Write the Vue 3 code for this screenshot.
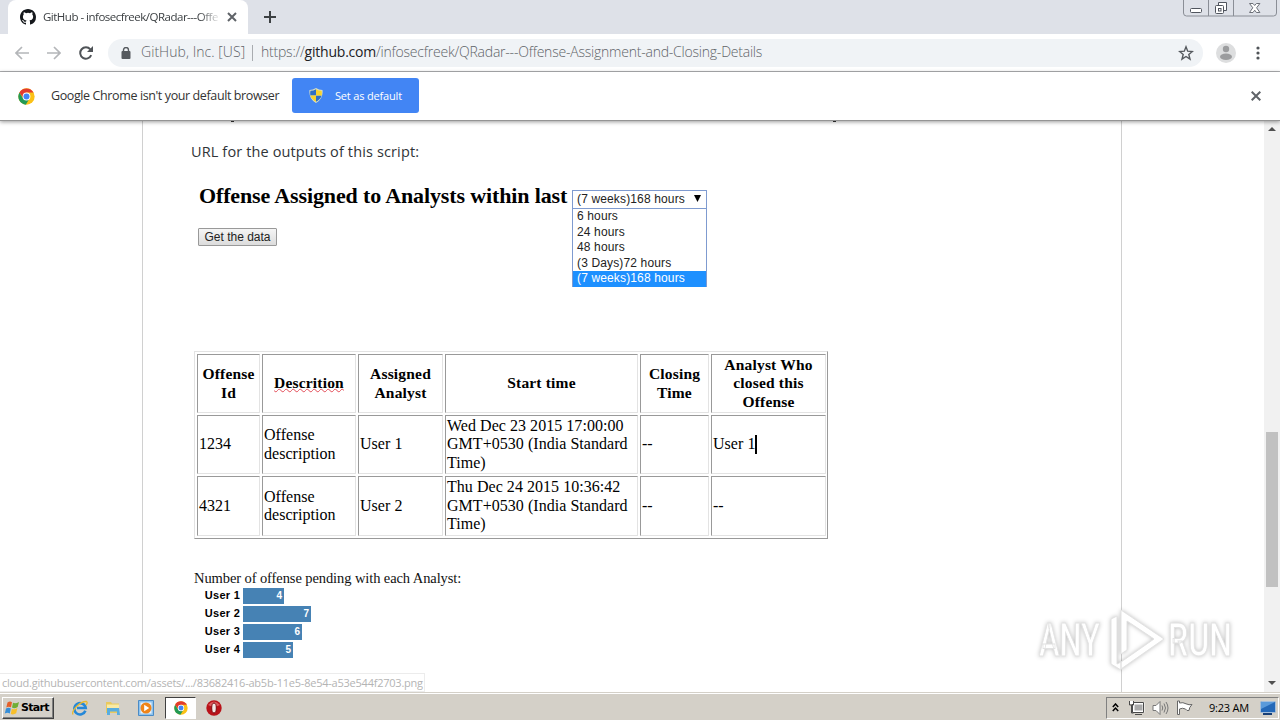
<template>
  <div class="screen">
    <header class="tabstrip">
      <div class="tab">
        <svg class="tab_icon" width="16" height="16" viewBox="0 0 16 16"><path fill="#15181c" d="M8 0C3.58 0 0 3.58 0 8c0 3.54 2.29 6.53 5.47 7.59.4.07.55-.17.55-.38 0-.19-.01-.82-.01-1.49-2.01.37-2.53-.49-2.69-.94-.09-.23-.48-.94-.82-1.13-.28-.15-.68-.52-.01-.53.63-.01 1.08.58 1.23.82.72 1.21 1.87.87 2.33.66.07-.52.28-.87.51-1.07-1.78-.2-3.64-.89-3.64-3.95 0-.87.31-1.59.82-2.15-.08-.2-.36-1.02.08-2.12 0 0 .67-.21 2.2.82a7.6 7.6 0 0 1 4 0c1.53-1.04 2.2-.82 2.2-.82.44 1.1.16 1.92.08 2.12.51.56.82 1.27.82 2.15 0 3.07-1.87 3.75-3.65 3.95.29.25.54.73.54 1.48 0 1.07-.01 1.93-.01 2.2 0 .21.15.46.55.38A8.01 8.01 0 0 0 16 8c0-4.42-3.58-8-8-8z"/></svg>
        <span class="tab_title">GitHub - infosecfreek/QRadar---Offe</span>
        <svg class="tab_close" width="10" height="10" viewBox="0 0 10 10"><path d="M1 1l8 8M9 1L1 9" stroke="#5f6368" stroke-width="2"/></svg>
      </div>
      <svg class="tab_new" width="14" height="14" viewBox="0 0 14 14"><path d="M7 1v12M1 7h12" stroke="#3c4043" stroke-width="2"/></svg>
      <svg class="win_btns" width="95" height="18" viewBox="0 0 95 18">
        <path d="M.5 0v13q0 3 3 3h87q3 0 3-3V0M25.500 0v16M50.500 0v16" fill="none" stroke="#8a8e96"/>
        <rect x="7.500" y="8.500" width="11" height="4" rx="1" fill="#fff" stroke="#50555e"/>
        <path d="M35.500 5V2.500h8v8H41" fill="#fff" stroke="#50555e"/>
        <rect x="32.500" y="5.500" width="8" height="8" rx="1" fill="#fff" stroke="#50555e"/>
        <rect x="35.500" y="8.500" width="2.500" height="2.500" fill="none" stroke="#50555e"/>
        <path d="M66.500 3.500h3.500l1.700 2 1.700-2h3.500l-3.300 4.300 3.300 4.700h-3.500l-1.700-2.300-1.700 2.300h-3.500l3.300-4.700z" fill="#fff" stroke="#6c7078"/>
      </svg>
    </header>

    <div class="toolbar">
      <svg class="nav" width="14" height="14" viewBox="0 0 14 14"><path d="M14 7H1.500M7 1L1 7l6 6" fill="none" stroke="#b4b6b9" stroke-width="1.700"/></svg>
      <svg class="nav" width="14" height="14" viewBox="0 0 14 14"><path d="M0 7h12.500M7 1l6 6-6 6" fill="none" stroke="#b4b6b9" stroke-width="1.700"/></svg>
      <svg class="nav reload" width="14" height="14" viewBox="0 0 14 14"><path d="M12.200 9.200A5.700 5.700 0 1 1 11.300 3.300" fill="none" stroke="#505458" stroke-width="2"/><path d="M14 0v6H8z" fill="#505458"/></svg>
      <div class="omnibox">
        <svg width="10" height="12" viewBox="0 0 10 12"><rect x=".5" y="4" width="9" height="8" rx="1" fill="#565a5f"/><path d="M2.500 5V3a2.500 2.500 0 0 1 5 0v2" fill="none" stroke="#565a5f" stroke-width="1.400"/></svg>
        <span class="owner">GitHub, Inc. [US]</span>
        <i class="sep"></i>
        <span class="url">https://<b>github.com</b>/infosecfreek/QRadar---Offense-Assignment-and-Closing-Details</span>
        <svg class="star" width="16" height="16" viewBox="0 0 16 16"><path d="M8 1.800l1.700 4.400 4.700.3-3.600 3 1.200 4.600L8 11.500l-4 2.600 1.200-4.600-3.600-3 4.700-.3z" fill="none" stroke="#55595e" stroke-width="1.400"/></svg>
      </div>
      <svg class="avatar" width="20" height="20" viewBox="0 0 20 20"><circle cx="10" cy="10" r="10" fill="#dddedf"/><circle cx="10" cy="6" r="3.200" fill="#9b9c9e"/><ellipse cx="10" cy="13.800" rx="6" ry="3.200" fill="#9b9c9e"/></svg>
      <svg class="dots" width="4" height="14" viewBox="0 0 4 14"><g fill="#505458"><circle cx="2" cy="2" r="1.600"/><circle cx="2" cy="7" r="1.600"/><circle cx="2" cy="12" r="1.600"/></g></svg>
    </div>

    <div class="infobar">
      <svg width="17" height="17" viewBox="0 0 48 48"><circle cx="24" cy="24" r="23" fill="#fbc116"/><path d="M4 12.500A23 23 0 0 0 22 47l11-18-9-5-10 5z" fill="#229a55"/><path d="M24 13h20a23 23 0 0 0-40-.5l10 14z" fill="#e33b2e"/><circle cx="24" cy="24" r="11" fill="#fff"/><circle cx="24" cy="24" r="8.500" fill="#4285f4"/></svg>
      <span class="info_text">Google Chrome isn't your default browser</span>
      <button class="default_btn">
        <svg width="14" height="15" viewBox="0 0 14 15"><path d="M7 0q3 2 6.500 2Q14.500 11 7 15-.5 11 .5 2 4 2 7 0z" fill="#d8dfc6"/><path d="M7 1.300V7.500H1.300Q1 5 1.400 2.800 4.600 2.800 7 1.300zM7 7.500h5.600Q11.500 11.500 7 13.800z" fill="#2f6fc4"/><path d="M7 1.300v6.200h5.700Q13 5 12.600 2.800 9.400 2.800 7 1.300zM7 7.500H1.400Q2.500 11.500 7 13.800z" fill="#f8d32d"/></svg>
        <span>Set as default</span>
      </button>
      <svg class="info_close" width="10" height="10" viewBox="0 0 10 10"><path d="M.7.7l8.600 8.600M9.300.7L.7 9.300" stroke="#5f6368" stroke-width="2"/></svg>
    </div>

    <main class="page">
      <article class="readme">
        <div class="cut"><i></i><i></i></div>
        <p class="intro">URL for the outputs of this script:</p>
        <div class="headline">
          <h2>Offense Assigned to Analysts within last</h2>
          <div class="select">
            <span>(7 weeks)168 hours</span>
            <svg width="7" height="7" viewBox="0 0 8 8"><path d="M0 0h8L4 8z"/></svg>
            <ul class="options">
              <li v-for="option in options" :key="option" :class="{ active: option === selected }">{{ option }}</li>
            </ul>
          </div>
        </div>
        <button class="get_btn">Get the data</button>

        <div class="table">
          <div v-for="head in heads" :key="head" class="cell head"><span :class="{ typo: head === 'Descrition' }">{{ head }}</span></div>
          <template v-for="row in rows" :key="row[0]">
            <div v-for="(value, i) in row" :key="i" class="cell">
              <span :class="{ caret: i === 5 && value === 'User 1' }">{{ value }}</span>
            </div>
          </template>
        </div>

        <p class="pending">Number of offense pending with each Analyst:</p>
        <div class="chart">
          <div v-for="bar in bars" :key="bar.name" class="bar_row">
            <span class="bar_name">{{ bar.name }}</span>
            <span class="bar" :style="{ width: bar.width + 'px' }">{{ bar.count }}</span>
          </div>
        </div>
      </article>

      <div class="scrollbar">
        <svg width="8" height="4" viewBox="0 0 8 4"><path d="M0 4l4-4 4 4z" fill="#505050"/></svg>
        <i class="thumb"></i>
        <svg width="8" height="4" viewBox="0 0 8 4"><path d="M0 0l4 4 4-4z" fill="#505050"/></svg>
      </div>

      <div class="status">cloud.githubusercontent.com/assets/.../83682416-ab5b-11e5-8e54-a53e544f2703.png</div>

      <svg class="watermark" width="220" height="76" viewBox="0 0 220 76">
        <g class="mark">
          <text x="9" y="53" textLength="61" lengthAdjust="spacingAndGlyphs">ANY</text>
          <text x="138" y="53" textLength="64" lengthAdjust="spacingAndGlyphs">RUN</text>
          <path d="M91 7l43 29-43 30v-7l33-23-27-18v29l-6 4zM81 16l6-3v48l4-2v8l-10-6z"/>
        </g>
      </svg>
    </main>

    <footer class="taskbar">
      <div class="start">
        <svg width="16" height="16" viewBox="0 0 16 16"><path d="M3.500 2.500Q6 .8 8 2.200L7 7.300Q4.600 6 2.300 7.400z" fill="#e5602a"/><path d="M9 2.700q2.500 1.300 6-.8l-1.300 5Q10.500 9 8 7.600z" fill="#70ae35"/><path d="M2 8.500q2.500-1.400 4.800-.1l-1 5.100Q3.500 12 .8 13.600z" fill="#368ed8"/><path d="M7.800 8.800q2.700 1.300 5.600-.7l-1.200 5.200q-3 1.900-5.400.7z" fill="#f8bf2a"/></svg>
        <span>Start</span>
      </div>
      <svg class="task" width="16" height="16" viewBox="0 0 16 16"><path d="M13.400 10.800A5.700 5.700 0 1 1 13.700 8H5" fill="none" stroke="#2588d8" stroke-width="2.600"/><path d="M1 14.500C-1 11 8 1 14.500 1.500q1.500.8-.5 3.700" fill="none" stroke="#e8b930" stroke-width="1.300"/></svg>
      <svg class="task" width="16" height="16" viewBox="0 0 16 16"><path d="M1 2h5l1 1.500h7V13H1z" fill="#e9c95f"/><path d="M2 4.500h12V10H2z" fill="#f9eaa5"/><path d="M2 8h12l1 7h-3v-3.500H5V15H2z" fill="#58ade0"/></svg>
      <svg class="task" width="16" height="16" viewBox="0 0 16 16"><path d="M.5.5h15v15H.5z" fill="#8ec3ee" stroke="#4a8bc6"/><rect x="2.500" y="2.500" width="11" height="11" fill="#e9f3fb"/><circle cx="8" cy="8" r="5.500" fill="#ef8419"/><path d="M6.200 4.800L11.200 8l-5 3.200z" fill="#fff"/></svg>
      <div class="task_active">
        <svg width="14" height="14" viewBox="0 0 48 48"><circle cx="24" cy="24" r="23" fill="#fbc116"/><path d="M4 12.500A23 23 0 0 0 22 47l11-18-9-5-10 5z" fill="#229a55"/><path d="M24 13h20a23 23 0 0 0-40-.5l10 14z" fill="#e33b2e"/><circle cx="24" cy="24" r="11" fill="#fff"/><circle cx="24" cy="24" r="8.500" fill="#4285f4"/></svg>
      </div>
      <svg class="opera" width="16" height="16" viewBox="0 0 16 16"><circle cx="8" cy="8" r="7.700" fill="#b91219"/><path d="M2 5q6-7 12 0-6 3-12 0z" fill="#dc5a5c"/><ellipse cx="8" cy="8" rx="2.300" ry="5" fill="#f1e9e6" stroke="#7c0a0e"/></svg>
      <div class="tray">
        <svg width="7" height="9" viewBox="0 0 7 9"><path d="M.8 4l2.700-3 2.700 3M.8 8l2.700-3 2.700 3" fill="none" stroke="#000" stroke-width="1.500"/></svg>
        <svg class="net" width="17" height="16" viewBox="0 0 17 16"><rect x="5.500" y="3.500" width="10" height="8" fill="#aaa" stroke="#fff" stroke-width="2"/><path d="M4.500 2.500h11v10h-11zM7 14.500h7M1.500 1v4h4V1M3.500 5v8h2" fill="none" stroke="#4a4a4a"/><path d="M2 1h3v3H2z" fill="#fff"/></svg>
        <svg class="sound" width="17" height="16" viewBox="0 0 17 16"><path d="M1 5.500h3l4-4v13l-4-4H1z" fill="#fff" stroke="#777"/><path d="M10 5.500q1.500 2.500 0 5M12 3.500q3 4.500 0 9M14 2q4 6 0 12" fill="none" stroke="#777"/></svg>
        <svg class="flag" width="17" height="16" viewBox="0 0 17 16"><path d="M1.500 1v13.500h2V9q3-1.500 6 0l1.500 1.500h2q0-3 3-6-3 .8-6-.7-3-1.800-6.500-.8V1z" fill="#fff" stroke="#666"/></svg>
        <span class="clock">9:23 AM</span>
        <svg class="desk" width="16" height="14" viewBox="0 0 16 14"><rect x=".5" y=".5" width="15" height="11" rx="1" fill="#2468b8" stroke="#a4bedb"/><path d="M1 1h14L1 8z" fill="#5a9adb"/><path d="M3 13h9" stroke="#183f76" stroke-width="2"/></svg>
      </div>
    </footer>
  </div>
</template>

<script setup>
const selected = '(7 weeks)168 hours';
const options = ['6 hours', '24 hours', '48 hours', '(3 Days)72 hours', '(7 weeks)168 hours'];

const heads = ['Offense Id', 'Descrition', 'Assigned Analyst', 'Start time', 'Closing Time', 'Analyst Who closed this Offense'];
const rows = [
  ['1234', 'Offense description', 'User 1', 'Wed Dec 23 2015 17:00:00 GMT+0530 (India Standard Time)', '--', 'User 1'],
  ['4321', 'Offense description', 'User 2', 'Thu Dec 24 2015 10:36:42 GMT+0530 (India Standard Time)', '--', '--']
];

const bars = [
  { name: 'User 1', count: 4, width: 41 },
  { name: 'User 2', count: 7, width: 68 },
  { name: 'User 3', count: 6, width: 59 },
  { name: 'User 4', count: 5, width: 50 }
];
</script>

<style>
body {
  background: #fff;
  overflow: hidden;
}
</style>

<style scoped>
* {
  box-sizing: border-box;
}
svg {
  display: block;
  flex: none;
}
.screen {
  width: 1280px;
  height: 720px;
  display: flex;
  flex-direction: column;
  overflow: hidden;
  background: #fff;
  font-family: "Open Sans", "Noto Sans", sans-serif;
  white-space: nowrap;
}

/* tabs */
.tabstrip {
  height: 34px;
  flex: none;
  display: flex;
  background: #dee1e8;
}
.tab {
  width: 240px;
  height: 34px;
  margin-left: 8px;
  padding-left: 12px;
  display: flex;
  align-items: center;
  background: #fff;
  border-radius: 8px 8px 0 0;
}
.tab_title {
  width: 178px;
  margin: -1px 0 0 7px;
  font-size: 11.500px;
  letter-spacing: -0.5px;
  color: #3c4043;
  -webkit-mask-image: linear-gradient(90deg, #000 88%, transparent);
  mask-image: linear-gradient(90deg, #000 88%, transparent);
}
.tab_close {
  margin-left: 6px;
}
.tab_new {
  margin: 10px 0 0 15px;
}
.win_btns {
  margin-left: auto;
  margin-right: 2px;
}

/* toolbar */
.toolbar {
  height: 38px;
  flex: none;
  display: flex;
  align-items: center;
  padding-left: 15px;
  border-bottom: 1px solid #b0b1b3;
}
.nav {
  margin-right: 18px;
}
.reload {
  margin-right: 15px;
}
.omnibox {
  width: 1095px;
  height: 28px;
  display: flex;
  align-items: center;
  padding-left: 13px;
  border-radius: 14px;
  background: #f0f3f6;
}
.owner,
.url {
  margin-top: -2px;
  font-size: 14px;
  font-weight: 300;
  color: #5f6368;
}
.owner {
  margin-left: 10px;
  width: 104px;
  letter-spacing: 0.05px;
}
.sep {
  width: 1px;
  height: 16px;
  margin: 0 8px 0 7px;
  background: #a9acb0;
}
.url {
  letter-spacing: -0.22px;
}
.url b {
  font-weight: 400;
  color: #202124;
}
.star {
  margin-left: auto;
  margin-right: 9px;
}
.avatar {
  margin-left: 13px;
}
.dots {
  margin-left: 20px;
}

/* default browser bar */
.infobar {
  position: relative;
  z-index: 1;
  height: 49px;
  flex: none;
  display: flex;
  align-items: center;
  padding: 0 19px 0 18px;
  background: #fff;
  border-bottom: 1px solid #949494;
  box-shadow: 0 1px 4px rgba(0, 0, 0, 0.4);
}
.info_text {
  width: 229px;
  margin: -2px 0 0 16px;
  font-size: 12.500px;
  letter-spacing: -0.39px;
  color: #333;
}
.default_btn {
  width: 127px;
  height: 35px;
  margin: 0 0 1px 12px;
  padding: 0 0 0 17px;
  display: flex;
  align-items: center;
  border: 0;
  border-radius: 3px;
  background: #4285f4;
  color: #fff;
  font-family: inherit;
  font-size: 11px;
  letter-spacing: -0.17px;
}
.default_btn span {
  margin: -1px 0 0 12px;
}
.info_close {
  margin-left: auto;
}

/* page */
.page {
  position: relative;
  height: 571px;
  flex: none;
  display: flex;
  justify-content: space-between;
}
.readme {
  width: 980px;
  margin-left: 142px;
  padding-left: 48px;
  border: solid #d0d0d0;
  border-width: 0 1px;
}
.cut {
  height: 1px;
  display: flex;
  gap: 599px;
  padding-left: 40px;
}
.cut i {
  width: 3px;
  background: #333;
}
.intro {
  margin: 19px 0 0;
  height: 22px;
  font-size: 14.500px;
  line-height: 22px;
  letter-spacing: 0.13px;
  color: #303438;
}
.headline {
  display: flex;
  align-items: flex-start;
  height: 44px;
  margin: 20px 0 0 8px;
}
h2 {
  width: 373px;
  margin: 0;
  font: bold 22px/26px "Liberation Serif", serif;
  letter-spacing: -0.13px;
  color: #000;
}
.select {
  position: relative;
  width: 135px;
  height: 19px;
  margin-top: 7px;
  padding: 0 5px 2px 4px;
  display: flex;
  align-items: center;
  justify-content: space-between;
  border: 1px solid #7f9bd0;
  font: 12px "Liberation Sans", sans-serif;
  letter-spacing: 0.14px;
  color: #222;
}
.options {
  position: absolute;
  top: 17px;
  left: -1px;
  width: 135px;
  margin: 0;
  padding: 0;
  list-style: none;
  border: 1px solid #7f9bd0;
  border-bottom: 0;
  background: #fff;
}
.options li {
  height: 15.500px;
  padding-left: 4px;
  line-height: 15px;
}
.options .active {
  height: 16px;
  background: #1e90ff;
  color: #fff;
}
.get_btn {
  display: block;
  width: 79px;
  height: 18px;
  margin: 1px 0 0 7px;
  padding: 0;
  border: 1px solid #999;
  border-radius: 1px;
  background: linear-gradient(#f5f5f5, #dcdcdc);
  font: 12px "Liberation Sans", sans-serif;
  color: #222;
}
.table {
  width: 634px;
  height: 188px;
  margin: 105px 0 0 3px;
  padding: 2px 0 0 2px;
  display: grid;
  grid-template-columns: 63px 94px 85px 193px 69px 115px;
  grid-template-rows: 59px 59px 60px;
  gap: 2px;
  border: 1px solid;
  border-color: #e3e3e3 #999 #999 #e3e3e3;
  font: 16px/18.400px "Liberation Serif", serif;
  letter-spacing: 0.04px;
  color: #000;
  white-space: normal;
}
.cell {
  display: flex;
  align-items: center;
  padding-left: 1px;
  border: 1px solid;
  border-color: #999 #e3e3e3 #e3e3e3 #999;
}
.head {
  justify-content: center;
  padding: 0;
  font-weight: bold;
  font-size: 15.500px;
  letter-spacing: 0.18px;
  text-align: center;
}
.typo {
  text-decoration: underline wavy #e34b56 1px;
  text-underline-offset: 0;
}
.caret {
  border-right: 2px solid #000;
}
.pending {
  margin: 30px 0 1px 3px;
  font: 14.500px/18px "Liberation Serif", serif;
  letter-spacing: -0.09px;
  color: #111;
}
.chart {
  display: flex;
  flex-direction: column;
  gap: 2px;
}
.bar_row {
  height: 16px;
  display: flex;
}
.bar_name {
  width: 49px;
  margin-right: 3px;
  text-align: right;
  font: bold 11px/14px "Liberation Sans", sans-serif;
  letter-spacing: 0.25px;
  color: #000;
}
.bar {
  padding-right: 2px;
  background: #4682b4;
  color: #fff;
  text-align: right;
  font: bold 10px/16px "Liberation Sans", sans-serif;
}
.scrollbar {
  width: 16px;
  display: flex;
  flex-direction: column;
  align-items: center;
  padding: 6px 0 7px;
  background: #f1f1f1;
}
.thumb {
  width: 12px;
  height: 155px;
  margin: 301px 0 auto;
  background: #c1c1c1;
}
.status {
  position: absolute;
  left: 0;
  bottom: 0;
  width: 425px;
  height: 19px;
  padding-left: 2px;
  border: 1px solid #ececec;
  border-left: 0;
  background: #fff;
  font-size: 11px;
  line-height: 18px;
  letter-spacing: -0.23px;
  color: #b4b4b4;
}
.watermark {
  position: absolute;
  left: 1030px;
  top: 482px;
  overflow: visible;
}
.mark {
  fill: #fff;
  stroke: #e2e2e2;
  stroke-width: 1px;
  filter: drop-shadow(0 0 2px rgba(0, 0, 0, 0.25));
  font: 500 46px Roboto, sans-serif;
}

/* taskbar */
.taskbar {
  height: 28px;
  flex: none;
  display: flex;
  align-items: center;
  padding: 2px 0 0 2px;
  border-top: 1px solid #d4d0c8;
  box-shadow: inset 0 1px #fff;
  background: #d4d0c8;
}
.start {
  width: 52px;
  height: 22px;
  display: flex;
  align-items: center;
  padding-left: 1px;
  border: 1px solid;
  border-color: #fff #404040 #404040 #fff;
  box-shadow: inset -1px -1px #808080;
  font: bold 11px "DejaVu Sans", sans-serif;
  letter-spacing: -0.7px;
  color: #000;
}
.start span {
  margin-left: 1px;
}
.task {
  margin-left: 18px;
}
.task + .task {
  margin-left: 17px;
}
.task_active {
  width: 31px;
  height: 22px;
  margin-left: 11px;
  display: flex;
  align-items: center;
  justify-content: center;
  border: 1px solid;
  border-color: #404040 #fff #fff #404040;
  background: #fff;
}
.opera {
  margin-left: 10px;
}
.tray {
  width: 173px;
  height: 22px;
  margin-left: auto;
  margin-right: 1px;
  padding-left: 5px;
  display: flex;
  align-items: center;
  border: 1px solid;
  border-color: #808080 #fff #fff #808080;
}
.net {
  margin-left: 9px;
}
.sound,
.flag {
  margin-left: 7px;
}
.clock {
  width: 42px;
  margin: -1px 0 0 16px;
  font-size: 11px;
  letter-spacing: -0.2px;
  color: #000;
}
.desk {
  margin-left: 9px;
}
</style>
